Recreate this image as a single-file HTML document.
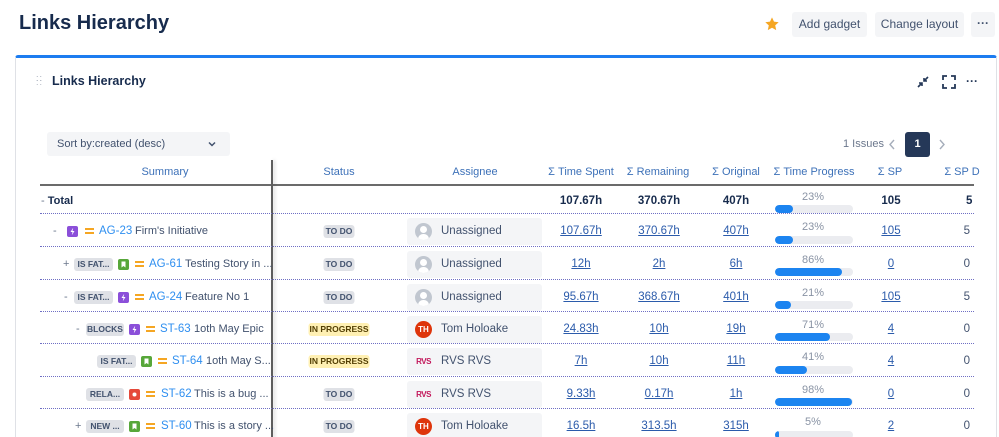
<!DOCTYPE html>
<html><head><meta charset="utf-8"><style>
*{margin:0;padding:0;box-sizing:border-box}
html,body{width:999px;height:437px;overflow:hidden}
body{background:#fff;font-family:"Liberation Sans",sans-serif;color:#172b4d;position:relative}
.a{position:absolute;white-space:nowrap}
.btn{position:absolute;top:12px;height:25px;background:#f4f5f7;border-radius:3px;font-size:12px;line-height:25px;text-align:center;color:#42526e}
.hd{position:absolute;top:166px;font-size:11px;color:#3d71b8;transform:translateX(-50%);white-space:nowrap}
.ln{position:absolute;left:40px;width:934px;height:0;border-top:1px dotted #6f6fc4}
.tag{position:absolute;height:13px;background:#dfe1e6;border-radius:3px;font-size:8.5px;font-weight:bold;color:#42526e;line-height:13px;text-align:center}
.ic{position:absolute;width:11px;height:11px;border-radius:2px}
.ic svg{position:absolute;left:0;top:0}
.pu{background:#8b4fd9}.gr{background:#57a73a}.rd{background:#e5493a}
.eq{position:absolute;width:9px;height:6px;border-top:2px solid #f5a623;border-bottom:2px solid #f5a623}
.key{position:absolute;font-size:11.5px;color:#2f8ff0;line-height:16px}
.tt{position:absolute;font-size:11px;color:#42526e;line-height:16px}
.pm{position:absolute;font-size:11px;color:#6b778c;line-height:16px}
.st{position:absolute;height:13px;border-radius:3px;font-size:8.5px;font-weight:bold;line-height:13px;text-align:center;transform:translateX(-50%)}
.todo{background:#dfe1e6;color:#42526e;width:31px}
.inp{background:#fff0b3;color:#533f04;width:61px}
.as{position:absolute;left:407px;width:135px;height:27px;background:#f4f5f7;border-radius:3px}
.av{position:absolute;left:8px;top:5px;width:17px;height:17px;border-radius:50%;overflow:hidden}
.un{background:#c1c7d0}
.un:before{content:"";position:absolute;left:5px;top:3px;width:7px;height:7px;border-radius:50%;background:#fff}
.un:after{content:"";position:absolute;left:3px;top:11px;width:11px;height:8px;background:#fff;border-radius:5px 5px 0 0}
.th{background:#de350b;color:#fff;font-size:8px;font-weight:bold;text-align:center;line-height:17px}
.rvs{background:none;color:#c2185b;font-size:8px;font-weight:bold;line-height:17px;text-align:center;letter-spacing:-0.5px}
.nm{position:absolute;left:34px;top:0;font-size:11.5px;line-height:27px;color:#42526e}
.v{position:absolute;transform:translateX(-50%);font-size:11.5px;color:#2b5bab;text-decoration:underline;line-height:16px;white-space:nowrap}
.b{position:absolute;transform:translateX(-50%);font-size:11.5px;font-weight:bold;color:#172b4d;line-height:16px}
.pt{position:absolute;left:813px;transform:translateX(-50%);font-size:11px;color:#8993a4;line-height:12px}
.bar{position:absolute;left:775px;width:78px;height:8px;background:#ebecf0;border-radius:4px;overflow:hidden}
.bar i{display:block;height:8px;background:#1c84f0;border-radius:4px}
.sd{position:absolute;left:970px;transform:translateX(-100%);font-size:11.5px;color:#42526e;line-height:16px}
</style></head><body>
<svg width="0" height="0" style="position:absolute"><defs>
<symbol id="bolt" viewBox="0 0 11 11"><path d="M6.2 1.8L3.5 6h2l-.7 3.2L7.5 5h-2z" fill="#fff"/></symbol>
<symbol id="bm" viewBox="0 0 11 11"><path d="M3.5 2.5h4v6L5.5 7 3.5 8.5z" fill="#fff"/></symbol>
<symbol id="dot" viewBox="0 0 11 11"><circle cx="5.5" cy="5.5" r="2" fill="#fff"/></symbol>
</defs></svg>
<div class="a" style="left:19px;top:12px;font-size:20px;font-weight:600;color:#172b4d">Links Hierarchy</div>
<svg class="a" style="left:764px;top:16px" width="16" height="16" viewBox="0 0 24 24"><path d="M12 2l3 6.5 7 .8-5.2 4.8 1.5 7L12 17.6 5.7 21.1l1.5-7L2 9.3l7-.8z" fill="#f5a623"/></svg>
<div class="btn" style="left:792px;width:75px">Add gadget</div>
<div class="btn" style="left:875px;width:89px">Change layout</div>
<div class="btn" style="left:971px;width:24px;font-weight:bold;line-height:22px">···</div>

<div class="a" style="left:15px;top:55px;width:982px;height:400px;border:1px solid #dfe1e6;border-top:3px solid #1c7cf0;border-radius:3px 3px 0 0"></div>
<div class="a" style="left:36px;top:76px;font-size:9px;color:#a5adba;line-height:4px;letter-spacing:1px">::<br>::</div>
<div class="a" style="left:52px;top:74px;font-size:12.5px;font-weight:bold;color:#172b4d">Links Hierarchy</div>
<svg class="a" style="left:916px;top:75px" width="14" height="14" viewBox="0 0 14 14" stroke="#253858" stroke-width="1.6" fill="none"><path d="M2 12l4-4M3 8h3v3M12 2l-4 4M8 3v3h3"/></svg>
<svg class="a" style="left:942px;top:75px" width="14" height="14" viewBox="0 0 14 14" stroke="#253858" stroke-width="1.8" fill="none"><path d="M1 5V1h4M9 1h4v4M13 9v4H9M5 13H1V9"/></svg>
<div class="a" style="left:966px;top:74px;font-size:12px;font-weight:bold;color:#253858">···</div>

<div class="a" style="left:47px;top:132px;width:183px;height:24px;background:#f4f5f7;border-radius:3px;font-size:11px;color:#42526e;line-height:24px;padding-left:10px">Sort by:created (desc)</div>
<svg class="a" style="left:208px;top:140px" width="8" height="8" viewBox="0 0 8 8"><path d="M1 2.5l3 3 3-3" stroke="#42526e" stroke-width="1.5" fill="none"/></svg>
<div class="a" style="left:843px;top:138px;font-size:11px;color:#6b778c">1 Issues</div>
<svg class="a" style="left:888px;top:139px" width="8" height="11" viewBox="0 0 8 11"><path d="M6 1L2 5.5 6 10" stroke="#a5adba" stroke-width="1.4" fill="none"/></svg>
<div class="a" style="left:905px;top:132px;width:25px;height:25px;background:#253858;border-radius:3px;color:#fff;font-size:11px;font-weight:bold;text-align:center;line-height:25px">1</div>
<svg class="a" style="left:938px;top:139px" width="8" height="11" viewBox="0 0 8 11"><path d="M2 1l4 4.5L2 10" stroke="#a5adba" stroke-width="1.4" fill="none"/></svg>

<div class="hd" style="left:165px">Summary</div>
<div class="hd" style="left:339px">Status</div>
<div class="hd" style="left:475px">Assignee</div>
<div class="hd" style="left:581px">Σ Time Spent</div>
<div class="hd" style="left:658px">Σ Remaining</div>
<div class="hd" style="left:736px">Σ Original</div>
<div class="hd" style="left:814px">Σ Time Progress</div>
<div class="hd" style="left:890px">Σ SP</div>
<div class="hd" style="left:962px">Σ SP D</div>
<div class="a" style="left:40px;top:184px;width:934px;height:2px;background:#6b6b6b"></div>
<div class="a" style="left:271px;top:160px;width:2px;height:280px;background:#5e5e5e;box-shadow:2px 0 3px rgba(0,0,0,.15)"></div>

<div class="ln" style="top:213px"></div><div class="ln" style="top:246px"></div><div class="ln" style="top:279px"></div><div class="ln" style="top:311px"></div><div class="ln" style="top:343px"></div><div class="ln" style="top:376px"></div><div class="ln" style="top:408px"></div>

<div class="a" style="left:41px;top:194px;font-size:11px;font-weight:bold;line-height:14px"><span style="font-weight:normal;color:#6b778c">- </span>Total</div>
<div class="b" style="left:581px;top:193px">107.67h</div>
<div class="b" style="left:659px;top:193px">370.67h</div>
<div class="b" style="left:736px;top:193px">407h</div>
<div class="pt" style="top:191px">23%</div><div class="bar" style="top:205px"><i style="width:18px"></i></div>
<div class="b" style="left:891px;top:193px">105</div>
<div class="a" style="left:966px;top:193px;font-size:11.5px;font-weight:bold;line-height:16px">5</div>

<div class="pm" style="left:53px;top:223px">-</div>
<div class="ic pu" style="left:67px;top:226px"><svg width="11" height="11"><use href="#bolt"/></svg></div><div class="eq" style="left:85px;top:228px"></div>
<div class="key" style="left:99px;top:223px">AG-23</div><div class="tt" style="left:135px;top:223px">Firm's Initiative</div>
<div class="st todo" style="left:339px;top:225px">TO DO</div>
<div class="as" style="top:218px"><div class="av un"></div><div class="nm">Unassigned</div></div>
<div class="v" style="left:581px;top:223px">107.67h</div><div class="v" style="left:659px;top:223px">370.67h</div><div class="v" style="left:736px;top:223px">407h</div>
<div class="pt" style="top:221px">23%</div><div class="bar" style="top:236px"><i style="width:18px"></i></div>
<div class="v" style="left:891px;top:223px">105</div><div class="sd" style="top:223px">5</div>

<div class="pm" style="left:63px;top:256px">+</div>
<div class="tag" style="left:74px;top:258px;width:39px">IS FAT...</div>
<div class="ic gr" style="left:118px;top:259px"><svg width="11" height="11"><use href="#bm"/></svg></div><div class="eq" style="left:135px;top:261px"></div>
<div class="key" style="left:149px;top:256px">AG-61</div><div class="tt" style="left:185px;top:256px">Testing Story in ...</div>
<div class="st todo" style="left:339px;top:258px">TO DO</div>
<div class="as" style="top:251px"><div class="av un"></div><div class="nm">Unassigned</div></div>
<div class="v" style="left:581px;top:256px">12h</div><div class="v" style="left:659px;top:256px">2h</div><div class="v" style="left:736px;top:256px">6h</div>
<div class="pt" style="top:254px">86%</div><div class="bar" style="top:268px"><i style="width:67px"></i></div>
<div class="v" style="left:891px;top:256px">0</div><div class="sd" style="top:256px">0</div>

<div class="pm" style="left:64px;top:289px">-</div>
<div class="tag" style="left:74px;top:291px;width:39px">IS FAT...</div>
<div class="ic pu" style="left:118px;top:292px"><svg width="11" height="11"><use href="#bolt"/></svg></div><div class="eq" style="left:135px;top:294px"></div>
<div class="key" style="left:149px;top:289px">AG-24</div><div class="tt" style="left:185px;top:289px">Feature No 1</div>
<div class="st todo" style="left:339px;top:291px">TO DO</div>
<div class="as" style="top:284px"><div class="av un"></div><div class="nm">Unassigned</div></div>
<div class="v" style="left:581px;top:289px">95.67h</div><div class="v" style="left:659px;top:289px">368.67h</div><div class="v" style="left:736px;top:289px">401h</div>
<div class="pt" style="top:287px">21%</div><div class="bar" style="top:301px"><i style="width:16px"></i></div>
<div class="v" style="left:891px;top:289px">105</div><div class="sd" style="top:289px">5</div>

<div class="pm" style="left:76px;top:321px">-</div>
<div class="tag" style="left:86px;top:323px;width:38px">BLOCKS</div>
<div class="ic pu" style="left:129px;top:324px"><svg width="11" height="11"><use href="#bolt"/></svg></div><div class="eq" style="left:146px;top:326px"></div>
<div class="key" style="left:160px;top:321px">ST-63</div><div class="tt" style="left:194px;top:321px">1oth May Epic</div>
<div class="st inp" style="left:339px;top:323px">IN PROGRESS</div>
<div class="as" style="top:316px"><div class="av th">TH</div><div class="nm">Tom Holoake</div></div>
<div class="v" style="left:581px;top:321px">24.83h</div><div class="v" style="left:659px;top:321px">10h</div><div class="v" style="left:736px;top:321px">19h</div>
<div class="pt" style="top:319px">71%</div><div class="bar" style="top:333px"><i style="width:55px"></i></div>
<div class="v" style="left:891px;top:321px">4</div><div class="sd" style="top:321px">0</div>

<div class="tag" style="left:97px;top:355px;width:39px">IS FAT...</div>
<div class="ic gr" style="left:141px;top:356px"><svg width="11" height="11"><use href="#bm"/></svg></div><div class="eq" style="left:158px;top:358px"></div>
<div class="key" style="left:172px;top:353px">ST-64</div><div class="tt" style="left:206px;top:353px">1oth May S...</div>
<div class="st inp" style="left:339px;top:355px">IN PROGRESS</div>
<div class="as" style="top:348px"><div class="av rvs">RVS</div><div class="nm">RVS RVS</div></div>
<div class="v" style="left:581px;top:353px">7h</div><div class="v" style="left:659px;top:353px">10h</div><div class="v" style="left:736px;top:353px">11h</div>
<div class="pt" style="top:351px">41%</div><div class="bar" style="top:366px"><i style="width:32px"></i></div>
<div class="v" style="left:891px;top:353px">4</div><div class="sd" style="top:353px">0</div>

<div class="tag" style="left:86px;top:388px;width:38px">RELA...</div>
<div class="ic rd" style="left:129px;top:389px"><svg width="11" height="11"><use href="#dot"/></svg></div><div class="eq" style="left:146px;top:391px"></div>
<div class="key" style="left:161px;top:386px">ST-62</div><div class="tt" style="left:194px;top:386px">This is a bug ...</div>
<div class="st todo" style="left:339px;top:388px">TO DO</div>
<div class="as" style="top:381px"><div class="av rvs">RVS</div><div class="nm">RVS RVS</div></div>
<div class="v" style="left:581px;top:386px">9.33h</div><div class="v" style="left:659px;top:386px">0.17h</div><div class="v" style="left:736px;top:386px">1h</div>
<div class="pt" style="top:384px">98%</div><div class="bar" style="top:398px"><i style="width:77px"></i></div>
<div class="v" style="left:891px;top:386px">0</div><div class="sd" style="top:386px">0</div>

<div class="pm" style="left:75px;top:418px">+</div>
<div class="tag" style="left:86px;top:420px;width:38px">NEW ...</div>
<div class="ic gr" style="left:129px;top:421px"><svg width="11" height="11"><use href="#bm"/></svg></div><div class="eq" style="left:146px;top:423px"></div>
<div class="key" style="left:161px;top:418px">ST-60</div><div class="tt" style="left:194px;top:418px">This is a story ...</div>
<div class="st todo" style="left:339px;top:420px">TO DO</div>
<div class="as" style="top:413px"><div class="av th">TH</div><div class="nm">Tom Holoake</div></div>
<div class="v" style="left:581px;top:418px">16.5h</div><div class="v" style="left:659px;top:418px">313.5h</div><div class="v" style="left:736px;top:418px">315h</div>
<div class="pt" style="top:416px">5%</div><div class="bar" style="top:431px"><i style="width:4px"></i></div>
<div class="v" style="left:891px;top:418px">2</div><div class="sd" style="top:418px">0</div>
</body></html>
